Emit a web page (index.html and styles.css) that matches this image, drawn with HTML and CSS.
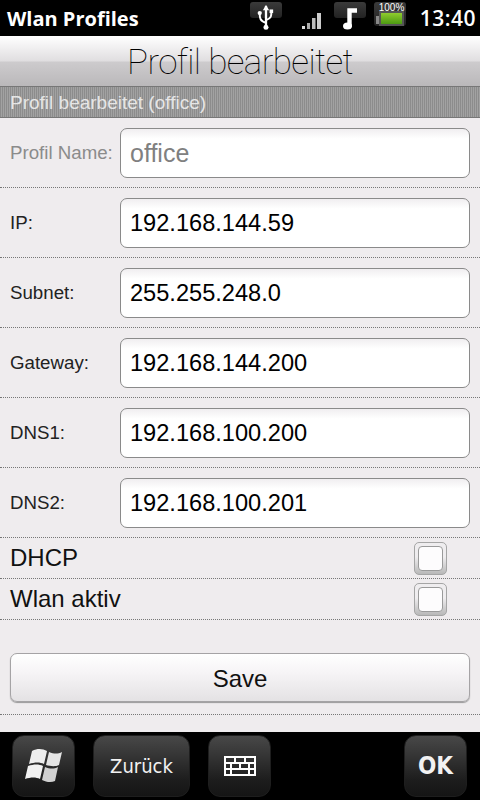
FILE: index.html
```html
<!DOCTYPE html>
<html>
<head>
    <title>Wlan Profiles</title>
    <meta charset="UTF-8">
    <link rel="stylesheet" href="styles.css">
</head>
<body>
    <div class="statusbar">
        <span class="app-name">Wlan Profiles</span>
        <div class="tray">
            <span class="tile tile-usb">
                <svg width="20" height="25" viewBox="0 0 22 28">
                    <path d="M11 1 L11 24" stroke="#fff" stroke-width="2.6" fill="none"/>
                    <path d="M11 0 L7.5 6 L14.5 6 Z" fill="#fff"/>
                    <circle cx="11" cy="25" r="2.8" fill="#fff"/>
                    <path d="M11 20 C4 18 4 14 4 10" stroke="#fff" stroke-width="2.2" fill="none"/>
                    <path d="M11 17 C17 15 17 12 17 8" stroke="#fff" stroke-width="2.2" fill="none"/>
                    <circle cx="4" cy="9" r="2.4" fill="#fff"/>
                    <rect x="15" y="5" width="4" height="4" fill="#fff"/>
                </svg>
            </span>
            <svg class="signal" width="19" height="16" viewBox="0 0 19 16">
                <rect x="0" y="13" width="3" height="3" fill="#ddd"/>
                <rect x="5" y="10" width="3" height="6" fill="#aaa"/>
                <rect x="10" y="5" width="3.5" height="11" fill="#bbb"/>
                <rect x="15" y="0" width="4" height="16" fill="#ccc"/>
            </svg>
            <span class="tile tile-note">
                <svg width="16" height="22" viewBox="0 0 16 22">
                    <path d="M7.5 19 L7.5 2.5 L15 2.5" stroke="#fff" stroke-width="4.4" fill="none"/>
                    <ellipse cx="5.5" cy="18" rx="4.5" ry="3.6" fill="#fff"/>
                </svg>
            </span>
            <span class="tile tile-batt">
                <span class="batt-text">100%</span>
                <span class="batt-nub"></span>
                <span class="batt-body"></span>
            </span>
            <span class="clock">13:40</span>
        </div>
    </div>

    <div class="titlebar">Profil bearbeitet</div>
    <div class="section">Profil bearbeitet (office)</div>

    <div class="row">
        <label class="label muted">Profil Name:</label>
        <input class="field muted-field" value="office">
    </div>
    <div class="row">
        <label class="label">IP:</label>
        <input class="field" value="192.168.144.59">
    </div>
    <div class="row">
        <label class="label">Subnet:</label>
        <input class="field" value="255.255.248.0">
    </div>
    <div class="row">
        <label class="label">Gateway:</label>
        <input class="field" value="192.168.144.200">
    </div>
    <div class="row">
        <label class="label">DNS1:</label>
        <input class="field" value="192.168.100.200">
    </div>
    <div class="row">
        <label class="label">DNS2:</label>
        <input class="field" value="192.168.100.201">
    </div>

    <div class="check-row">
        <span>DHCP</span>
        <span class="checkbox"><span class="check-inner"></span></span>
    </div>
    <div class="check-row">
        <span>Wlan aktiv</span>
        <span class="checkbox"><span class="check-inner"></span></span>
    </div>

    <div class="save-row">
        <button class="save">Save</button>
    </div>

    <div class="footer">
        <span class="softkey key-win">
            <svg width="40" height="36" viewBox="0 0 40 36">
                <path d="M8 3 C14 0 19 1 23 3 L20 16 C16 14 11 14 5 16 Z" fill="#eee"/>
                <path d="M25 4 C30 6 34 6 38 4 L35 17 C31 19 26 18 22 17 Z" fill="#e4e4e4"/>
                <path d="M4 18 C10 16 15 16 19 18 L16 31 C12 29 7 29 1 31 Z" fill="#f2f2f2"/>
                <path d="M21 19 C26 21 30 21 34 19 L31 33 C27 35 22 34 18 32 Z" fill="#d0d0d0"/>
            </svg>
        </span>
        <span class="softkey key-back">Zurück</span>
        <span class="softkey key-kbd">
            <svg width="32" height="20" viewBox="0 0 32 20">
                <path d="M1 1 H31 V19 H1 Z M1 7 H31 M1 13 H31 M11 1 V7 M21 1 V7 M7 7 V13 M16 7 V13 M25 7 V13 M7 13 V19 M25 13 V19" stroke="#fff" stroke-width="2" fill="none"/>
            </svg>
        </span>
        <span class="softkey key-ok">OK</span>
    </div>
</body>
</html>
```

FILE: styles.css
```css
body {
    margin: 0;
    width: 480px;
    height: 800px;
    overflow: hidden;
    background: #efecee;
    font-family: "Liberation Sans", sans-serif;
    display: flex;
    flex-direction: column;
}

.statusbar {
    height: 36px;
    background: #000;
    display: flex;
    align-items: center;
    justify-content: space-between;
    padding: 0 4px 0 7px;
    color: #fff;
}
.app-name {
    font-family: "Open Sans", sans-serif;
    font-size: 20px;
    font-weight: 700;
}
.tray {
    display: flex;
    align-items: flex-start;
    height: 36px;
}
.tile {
    width: 32px;
    height: 16px;
    margin-top: 2px;
    border-radius: 3px;
    background: linear-gradient(#3a3a3a, #222);
    display: flex;
    justify-content: center;
    position: relative;
}
.tile svg {
    flex: none;
}
.tile-usb { margin-right: 20px; }
.tile-usb svg { margin-top: 3px; }
.signal { margin-top: 13px; margin-right: 13px; }
.tile-note { margin-right: 8px; }
.tile-note svg { margin-top: 6px; }
.tile-batt {
    margin-right: 14px;
    height: 24px;
}
.batt-text {
    position: absolute;
    top: 0;
    left: 5px;
    font-size: 10px;
    color: #fff;
}
.batt-nub {
    position: absolute;
    top: 14px;
    left: 2px;
    width: 3px;
    height: 8px;
    background: #888;
}
.batt-body {
    position: absolute;
    top: 9px;
    left: 5px;
    width: 25px;
    height: 15px;
    background: linear-gradient(#8fcb2e, #4c9a12);
    border: 2px solid #555;
    box-sizing: border-box;
}
.clock {
    font-family: "Open Sans", sans-serif;
    font-size: 21px;
    font-weight: 600;
    letter-spacing: 0.5px;
    line-height: 36px;
}

.titlebar {
    height: 50px;
    background: linear-gradient(#ffffff, #e0dee0 50%, #cdcbcd 52%, #bab8ba);
    text-align: center;
    font-family: "Roboto", sans-serif;
    font-weight: 100;
    font-size: 35px;
    letter-spacing: -0.6px;
    line-height: 53px;
    color: #000;
}
.section {
    height: 32px;
    box-sizing: border-box;
    padding-left: 10px;
    line-height: 31px;
    font-size: 19px;
    color: #e6e6e6;
    border-top: 1px solid #777;
    border-bottom: 1px solid #777;
    background: repeating-linear-gradient(90deg, #8c8c8c 0 1px, #a2a2a2 1px 2px);
}

.row {
    height: 70px;
    box-sizing: border-box;
    border-bottom: 1px dotted #777;
    display: flex;
    align-items: center;
    padding: 0 10px;
}
.label {
    width: 110px;
    font-size: 18.7px;
    color: #222;
}
.label.muted { color: #8b8b8b; }
.field {
    width: 350px;
    height: 50px;
    box-sizing: border-box;
    border: 1px solid #8a8a8a;
    border-radius: 7px;
    background: linear-gradient(#f0eef0, #ffffff 20%);
    padding: 2px 9px 0;
    font-family: "Liberation Sans", sans-serif;
    font-size: 23.6px;
    color: #000;
}
.muted-field {
    color: #808080;
    font-size: 25px;
}

.check-row {
    height: 41px;
    box-sizing: border-box;
    border-bottom: 1px dotted #777;
    display: flex;
    align-items: center;
    justify-content: space-between;
    padding: 0 33px 0 10px;
    font-size: 24px;
    color: #111;
}
.checkbox {
    width: 33px;
    height: 33px;
    box-sizing: border-box;
    border: 1px solid #a5a5a5;
    border-radius: 5px;
    background: linear-gradient(#efedef 45%, #b8b8b8);
    display: flex;
    align-items: center;
    justify-content: center;
}
.check-inner {
    width: 25px;
    height: 25px;
    box-sizing: border-box;
    border: 1px solid #9a9a9a;
    border-radius: 4px;
    background: #fdfcfd;
}

.save-row {
    height: 95px;
    box-sizing: border-box;
    padding: 33px 10px 0;
    border-bottom: 1px dotted #777;
}
.save {
    width: 460px;
    height: 49px;
    padding-top: 3px;
    border: 1px solid #a5a3a5;
    border-radius: 7px;
    background: linear-gradient(#ffffff, #f6f4f6 40%, #e4e2e4);
    box-shadow: 0 1px 1px #999;
    font-family: "Liberation Sans", sans-serif;
    font-size: 24px;
    color: #111;
}

.footer {
    margin-top: 17px;
    height: 68px;
    background: #000;
    display: flex;
    align-items: center;
    padding-left: 12px;
    padding-right: 13px;
}
.softkey {
    height: 62px;
    box-sizing: border-box;
    border: 1px solid #1e1e1e;
    border-radius: 12px;
    background: linear-gradient(#484848, #1c1c1c 75%, #151515);
    display: flex;
    align-items: center;
    justify-content: center;
    color: #f2f2f2;
    font-family: "DejaVu Sans", sans-serif;
    font-stretch: condensed;
    font-size: 20px;
}
.key-win { width: 63px; margin-right: 18px; }
.key-back { width: 97px; margin-right: 18px; }
.key-kbd { width: 63px; }
.key-ok {
    width: 63px;
    margin-left: auto;
    font-weight: 700;
    font-size: 24px;
}
```
